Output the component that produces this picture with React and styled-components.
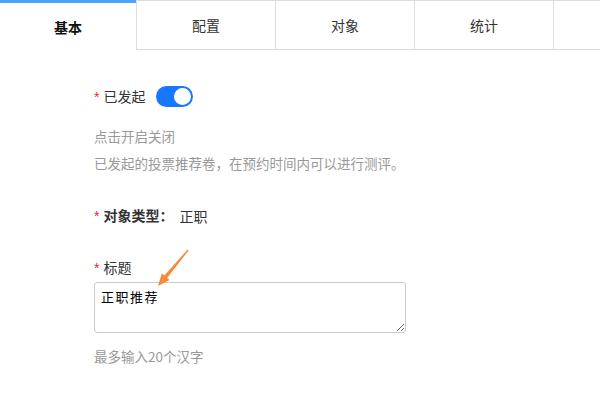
import React, { useState } from "react";
import styled, { createGlobalStyle } from "styled-components";

const GlobalStyle = createGlobalStyle`
  html, body {
    margin: 0;
    padding: 0;
    background: #fff;
  }
  body {
    font-family: "Noto Sans CJK SC", "Noto Sans", sans-serif;
    color: #333;
  }
`;

const tabs = ["基本", "配置", "对象", "统计", ""];

export default function App() {
  const [active, setActive] = useState(0);
  const [on, setOn] = useState(true);
  const [title, setTitle] = useState("正职推荐");

  return (
    <>
      <GlobalStyle />
      <Page>
        <TabBar>
          {tabs.map((t, i) => (
            <Tab key={i} $active={i === active} onClick={() => setActive(i)}>
              {t}
            </Tab>
          ))}
        </TabBar>

        <Form>
          <Row $top={36}>
            <Label>
              <Star>*</Star>已发起
            </Label>
            <Switch $on={on} onClick={() => setOn(!on)}>
              <Knob $on={on} />
            </Switch>
          </Row>
          <Hint $top={20}>点击开启关闭</Hint>
          <Hint $top={8}>已发起的投票推荐卷，在预约时间内可以进行测评。</Hint>

          <Row $top={32}>
            <Label $bold>
              <Star>*</Star>对象类型：
            </Label>
            <Value>正职</Value>
          </Row>

          <Row $top={31}>
            <Label>
              <Star>*</Star>标题
            </Label>
          </Row>
          <TitleInput value={title} onChange={(e) => setTitle(e.target.value)} />
          <Hint $top={14}>最多输入20个汉字</Hint>
        </Form>

        {/* annotation arrow pointing at the title input */}
        <Arrow width="50" height="50" viewBox="150 245 50 50">
          <polygon
            points="188.6,250.4 167.1,278.0 169.6,280.1 158,286 161.8,273.5 164.3,275.6 187.6,249.6"
            fill="#f7893b"
          />
        </Arrow>
      </Page>
    </>
  );
}

const Page = styled.div`
  position: relative;
  width: 600px;
  height: 400px;
  overflow: hidden;
  background: #fff;
`;

const TabBar = styled.div`
  display: flex;
  height: 50px;
`;

const Tab = styled.div`
  flex: 0 0 139px;
  box-sizing: border-box;
  height: 50px;
  display: flex;
  align-items: center;
  justify-content: center;
  font-size: 14px;
  cursor: pointer;
  color: ${(p) => (p.$active ? "#111" : "#333")};
  font-weight: ${(p) => (p.$active ? 700 : 400)};
  border-top: ${(p) => (p.$active ? "3px solid #4da3ff" : "1px solid #ddd")};
  border-left: ${(p) => (p.$active ? "none" : "1px solid #ddd")};
  border-bottom: ${(p) => (p.$active ? "none" : "1px solid #ddd")};
  &:first-child {
    flex-basis: 136px;
  }
  &:last-child {
    flex-basis: 100px;
  }
`;

const Form = styled.div`
  padding-left: 94px;
  display: flex;
  flex-direction: column;
  align-items: flex-start;
`;

const Row = styled.div`
  display: flex;
  align-items: center;
  height: 21px;
  margin-top: ${(p) => p.$top}px;
`;

const Label = styled.span`
  font-size: 14px;
  line-height: 21px;
  color: #333;
  font-weight: ${(p) => (p.$bold ? 700 : 400)};
  margin-right: ${(p) => (p.$bold ? 6 : 11)}px;
`;

const Star = styled.span`
  color: #f5222d;
  font-family: "Liberation Sans", sans-serif;
  font-weight: 400;
  margin-right: 4px;
`;

const Value = styled.span`
  font-size: 14px;
  color: #333;
`;

const Switch = styled.div`
  position: relative;
  width: 37px;
  height: 21px;
  border-radius: 11px;
  background: ${(p) => (p.$on ? "#1677ff" : "#ccc")};
  cursor: pointer;
`;

const Knob = styled.div`
  position: absolute;
  top: 2px;
  left: ${(p) => (p.$on ? 18 : 2)}px;
  width: 17px;
  height: 17px;
  border-radius: 50%;
  background: #fff;
`;

const Hint = styled.div`
  font-size: 13.5px;
  line-height: 19px;
  color: #999;
  margin-top: ${(p) => p.$top}px;
`;

const TitleInput = styled.textarea`
  box-sizing: border-box;
  margin-top: 4px;
  width: 312px;
  height: 51px;
  border: 1px solid #ccc;
  border-radius: 3px;
  padding: 5px 6px;
  font-family: "Noto Sans CJK SC", sans-serif;
  font-size: 13px;
  line-height: 18px;
  letter-spacing: 1.5px;
  color: #000;
  outline: none;
`;

const Arrow = styled.svg`
  position: absolute;
  left: 150px;
  top: 245px;
  pointer-events: none;
`;
